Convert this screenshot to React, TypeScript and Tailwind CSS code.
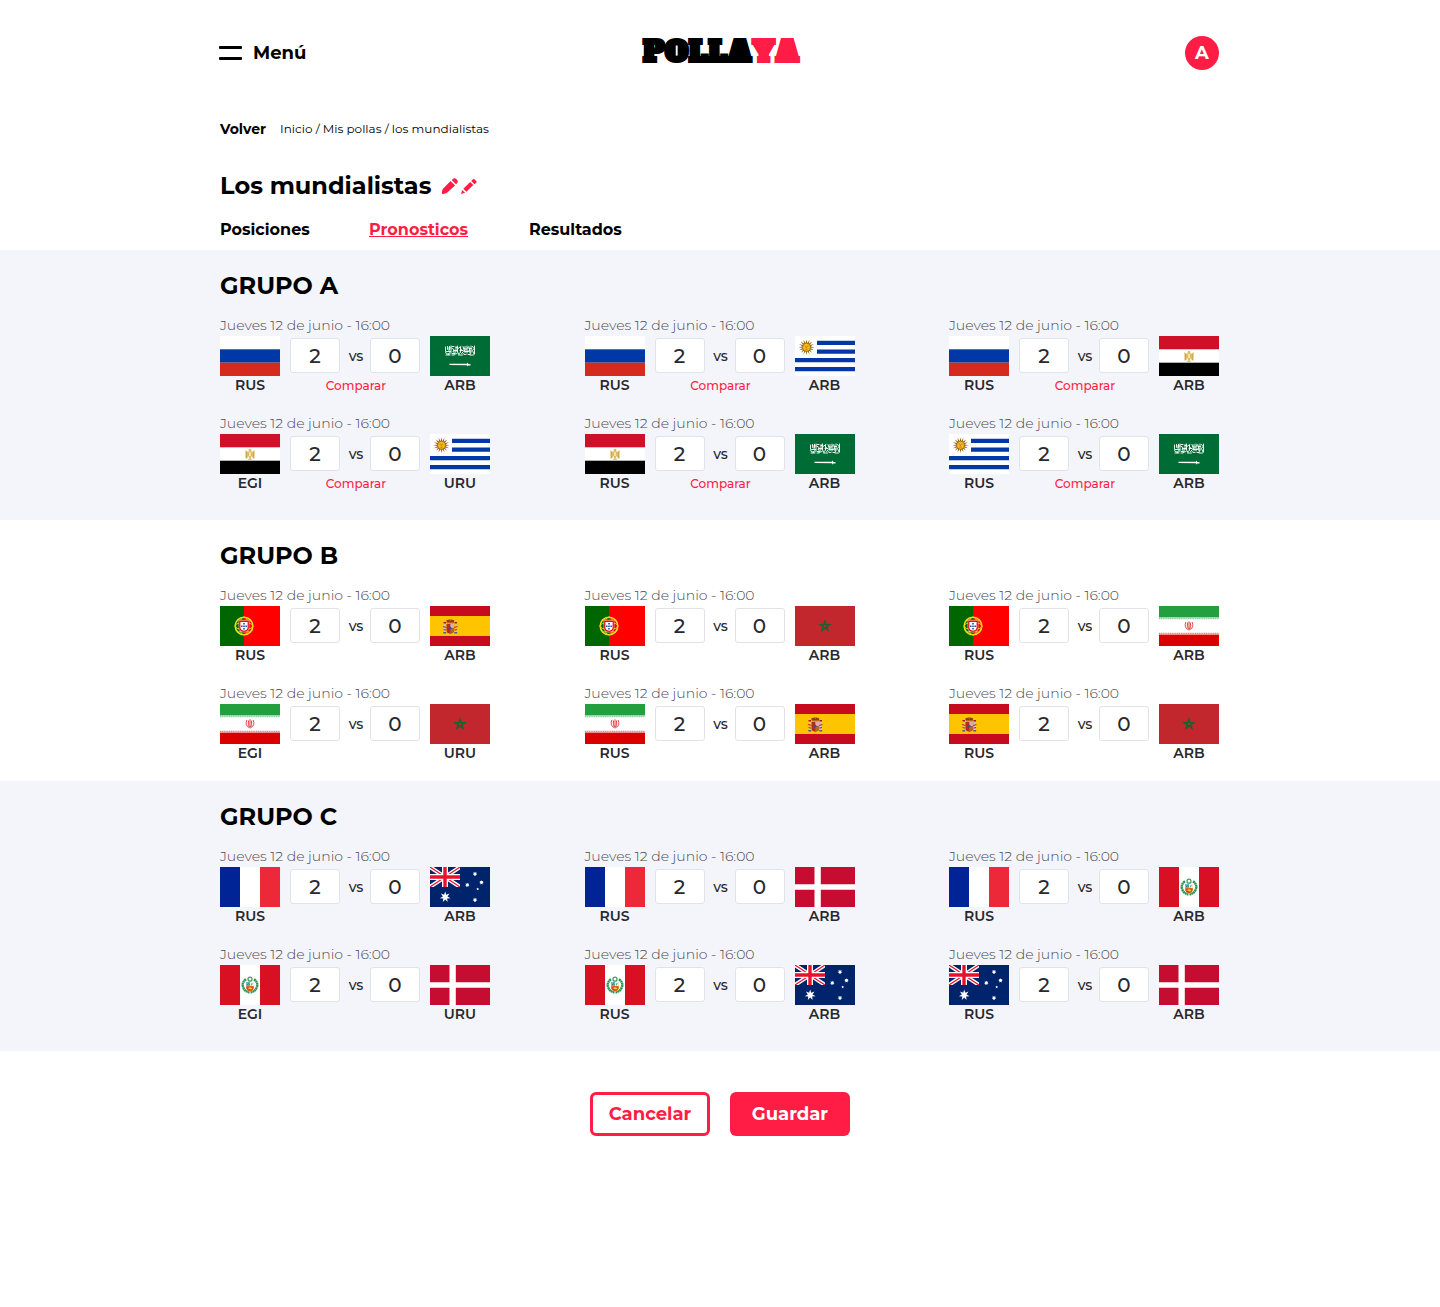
import type { ReactNode } from "react";

type FlagCode = "rus" | "ksa" | "uru" | "egy" | "por" | "esp" | "irn" | "mar" | "fra" | "aus" | "per" | "den";

function starPoints(cx: number, cy: number, outer: number, inner: number, tips: number) {
  return Array.from({ length: tips * 2 }, (_, i) => {
    const r = i % 2 === 0 ? outer : inner;
    const a = (Math.PI * i) / tips - Math.PI / 2;
    return `${(cx + r * Math.cos(a)).toFixed(2)},${(cy + r * Math.sin(a)).toFixed(2)}`;
  }).join(" ");
}

const flagArt: Record<FlagCode, ReactNode> = {
  rus: (
    <>
      <rect width="60" height="40" fill="#fff" />
      <rect y="13.3" width="60" height="13.4" fill="#0039a6" />
      <rect y="26.7" width="60" height="13.3" fill="#d52b1e" />
    </>
  ),
  ksa: (
    <>
      <rect width="60" height="40" fill="#006c35" />
      <g fill="none" stroke="#fff" strokeWidth=".9" strokeLinecap="round">
        <path d="M15.500 11v4.500q0 3 2.500 2.500l2-1.500M17.500 10.500v3l2 .8v-4M21 10v6.500q-1.500 2.500-3 2.300M21.500 12l2.500 1.500-1 2.500h3V10.500M24 18.500l3-1M27.500 10v6l1.500 2.500M28 12.500l3-2M30.500 11v5.500l-1.500 1M31.500 17.500l2-2-2-2M33 10.500l2 6v-6M36 18.500q-3 .5-3-1M37 10v7M36 13.500l3-3 1 6.500M38 18.500h2M41 10v6q0 2-1.500 2.500M42.500 10.500l1.500 2-1.500 2 1.500 3.500M44.500 10v8" />
        <path d="M16 19h4M22 19h2M26 11.500h1.500M18.500 12h2M22 10.500h2M34 12.500l1.500.5M39 12.500h2.500M16.500 15.500h4M22 17.500h3M28.500 19h4M30 14.500h3M35 15.500h3.500M40 19h3.500M24 14.500h3M38 15h3" />
      </g>
      <path d="M19.500 27.800H37l.3-1h.8v1.100l2.600.3-.3 1.300H38v.7h-.8v-1l-17.700-.3z" fill="#fff" />
    </>
  ),
  uru: (
    <>
      <rect width="60" height="40" fill="#fff" />
      <path d="M22 4.700h38v4.300H22zM22 13.600h38v4.200H22zM0 22h60v4.300H0zM0 31h60v4.200H0z" fill="#0038a8" />
      <polygon points={starPoints(11.5, 11.2, 8, 4, 16)} fill="#9a6412" />
      <circle cx="11.500" cy="11.200" r="4" fill="#f5bd16" stroke="#8a5a12" strokeWidth=".6" />
      <path d="M9.600 10.200h1.300M12.100 10.200h1.300M10.300 13.100h2.400M11.500 10.500v1.300" stroke="#7b3f00" strokeWidth=".5" />
    </>
  ),
  egy: (
    <>
      <rect width="60" height="40" fill="#fff" />
      <rect width="60" height="13.300" fill="#ce1126" />
      <rect y="26.700" width="60" height="13.300" fill="#000" />
      <path d="M25.400 16l2.200 1.700 1.200-.2-.2-2 1.400-.7 1.400.7-.2 2 1.200.2 2.200-1.700v8.500h-1.800l-1-3-1 3.300h-1.600l-1-3.300-1 3h-1.800z" fill="#dcbc64" />
      <path d="M29.300 18h1.400v4h-1.400z" fill="#fff4cf" />
      <path d="M26.500 18v6M33.500 18v6M28 25.300h4" stroke="#c79f45" strokeWidth=".7" />
    </>
  ),
  por: (
    <>
      <rect width="60" height="40" fill="#f00" />
      <rect width="24" height="40" fill="#060" />
      <circle cx="24" cy="20" r="8.800" fill="none" stroke="#f3e21b" strokeWidth="1.600" />
      <ellipse cx="24" cy="20" rx="9" ry="3.500" fill="none" stroke="#e8d51a" strokeWidth="1" />
      <ellipse cx="24" cy="20" rx="4.500" ry="9" fill="none" stroke="#e8d51a" strokeWidth="1" />
      <path d="M17.500 14q7 1 13 0M17.500 26q7-1 13 0" fill="none" stroke="#e8d51a" />
      <path d="M18.800 14.300h10.400v7q0 4.500-5.200 5-5.200-.5-5.200-5z" fill="#e30b17" stroke="#fff" strokeWidth=".4" />
      <path d="M20.400 16h7.200v5.300q0 3-3.600 3.500-3.600-.5-3.600-3.500z" fill="#fff" />
      <path d="M23.300 17h1.400v1.500h-1.400zM23.300 19.600h1.400v1.500h-1.400zM23.300 22h1.400v1.400h-1.400zM21.200 19.600h1.300v1.500h-1.300zM25.500 19.600h1.300v1.500h-1.300z" fill="#003399" />
    </>
  ),
  esp: (
    <>
      <rect width="60" height="40" fill="#c60b1e" />
      <rect y="10" width="60" height="20" fill="#ffc400" />
      <path d="M14 18h1.500v8H14zM25 18h1.500v8H25z" fill="#c9c2b8" />
      <path d="M13.300 26h2.900v1.400h-2.900zM24.300 26h2.900v1.400h-2.900z" fill="#4a5d9a" />
      <path d="M13.500 16h2.500v1.500h-2.500zM24.500 16H27v1.500h-2.500z" fill="#ad1519" />
      <path d="M13 20.500l3.500 1M27.500 20.500l-3.500 1M13.500 23.500l2.500.6M27 23.500l-2.500.6" stroke="#ad1519" strokeWidth=".9" />
      <path d="M16.500 18h7.600v6.500q0 2.700-3.800 3.200-3.800-.5-3.800-3.200z" fill="#b32a25" />
      <path d="M20.300 18h3.800v4.200h-3.800z" fill="#dcae9c" />
      <path d="M20.300 22.200h3.800v2.500q-.5 2-3.800 2.700z" fill="#b26a28" />
      <ellipse cx="20.300" cy="22.200" rx="1.200" ry="1.400" fill="#3c4d91" />
      <path d="M17 17.200l-.8-2.700 2.200-.8 1.900-.5 1.900.5 2.200.8-.8 2.700z" fill="#9c3420" />
      <path d="M17 16.800h6.600M20.300 13v2" stroke="#d9a400" strokeWidth=".7" />
    </>
  ),
  irn: (
    <>
      <rect width="60" height="40" fill="#fff" />
      <rect width="60" height="11.400" fill="#239f40" />
      <rect y="28.600" width="60" height="11.400" fill="#da0000" />
      <path d="M0 12.300h60" stroke="#8fcc9e" strokeWidth="1.800" strokeDasharray="1.300 .5" />
      <path d="M0 27.700h60" stroke="#eb8080" strokeWidth="1.800" strokeDasharray="1.300 .5" />
      <path d="M30 15.300v9.200M26.800 16q-2 5.500 2.200 7.500M33.200 16q2 5.500-2.200 7.500M28.600 16.500q-1 4 .9 6.800M31.400 16.500q1 4-.9 6.800" fill="none" stroke="#e02f2f" strokeWidth=".9" />
    </>
  ),
  mar: (
    <>
      <rect width="60" height="40" fill="#c1272d" />
      <path d="M30 14.800l3.200 9.700-8.300-6h10.200l-8.300 6z" fill="none" stroke="#17602f" strokeWidth="1.100" />
    </>
  ),
  fra: (
    <>
      <rect width="60" height="40" fill="#fff" />
      <rect width="20" height="40" fill="#002395" />
      <rect x="40" width="20" height="40" fill="#ed2939" />
    </>
  ),
  aus: (
    <>
      <rect width="60" height="40" fill="#00246b" />
      <path d="M0 0h3.500L30 17.600V20h-3.500L0 2.400zM30 0v2.400L3.500 20H0v-2.400L26.500 0z" fill="#fff" />
      <path d="M0 0l11 7.300M30 0L19 7.300M0 20l11-7.300M30 20l-11-7.300" stroke="#e8112d" strokeWidth="1.200" />
      <path d="M12 0h6v7h12v6H18v7h-6v-7H0V7h12z" fill="#fff" />
      <path d="M13.300 0h3.400v8.200H30v3.600H16.700V20h-3.400v-8.200H0V8.200h13.300z" fill="#e8112d" />
      <polygon points={starPoints(15.2, 30, 5.5, 2.4, 7)} fill="#fff" />
      <polygon points={starPoints(45, 7, 2.3, 1.3, 7)} fill="#fff" />
      <polygon points={starPoints(37.3, 18, 2.3, 1.3, 7)} fill="#fff" />
      <polygon points={starPoints(51.5, 15.5, 2.3, 1.3, 7)} fill="#fff" />
      <polygon points={starPoints(45, 33, 2.3, 1.3, 7)} fill="#fff" />
      <polygon points={starPoints(47.7, 22, 1.5, 0.7, 5)} fill="#fff" />
    </>
  ),
  per: (
    <>
      <rect width="60" height="40" fill="#fff" />
      <rect width="20" height="40" fill="#d91023" />
      <rect x="40" width="20" height="40" fill="#d91023" />
      <path d="M26 14.200q-5 3.800-2.500 8.800 2 4 6 4.300M34 14.200q5 3.800 2.500 8.800-2 4-6 4.300" fill="none" stroke="#2f9355" strokeWidth="2.400" strokeDasharray="2 .3" />
      <circle cx="30" cy="14.200" r="2" fill="none" stroke="#439b55" strokeWidth="1.200" />
      <path d="M26.200 17h7.600v5.500q0 3-3.800 3.700-3.800-.7-3.800-3.700z" fill="#f2c230" />
      <path d="M26.200 17H30v4h-3.800z" fill="#55b6d8" />
      <path d="M30 17h3.800v4H30z" fill="#f3f3e6" />
      <path d="M26.300 21.200h7.400v1.300q0 3-3.700 3.600-3.700-.6-3.700-3.600z" fill="#d9442c" />
      <path d="M28 23.500q2-2.500 4.500 0l-1.500 1z" fill="#f7cc2d" />
      <path d="M31.200 20.500l1-2.500M27 20l1.500-1.500 1 1.500" stroke="#376f3e" strokeWidth=".7" fill="none" />
    </>
  ),
  den: (
    <>
      <rect width="60" height="40" fill="#c60c30" />
      <path d="M19.500 0h6.300v17.200H60v5.600H25.800V40h-6.300V22.800H0v-5.600h19.500z" fill="#fff" />
    </>
  ),
};

const flagNames: Record<FlagCode, string> = {
  rus: "Rusia",
  ksa: "Arabia Saudita",
  uru: "Uruguay",
  egy: "Egipto",
  por: "Portugal",
  esp: "España",
  irn: "Irán",
  mar: "Marruecos",
  fra: "Francia",
  aus: "Australia",
  per: "Perú",
  den: "Dinamarca",
};

type Game = { home: FlagCode; away: FlagCode; homeLabel: string; awayLabel: string };

function game(home: FlagCode, away: FlagCode, homeLabel = "RUS", awayLabel = "ARB"): Game {
  return { home, away, homeLabel, awayLabel };
}

const groups = [
  {
    name: "GRUPO A",
    compare: true,
    className: "bg-[#f4f5fa] pb-7",
    games: [
      game("rus", "ksa"),
      game("rus", "uru"),
      game("rus", "egy"),
      game("egy", "uru", "EGI", "URU"),
      game("egy", "ksa"),
      game("uru", "ksa"),
    ],
  },
  {
    name: "GRUPO B",
    compare: false,
    className: "bg-white pb-[19px]",
    games: [
      game("por", "esp"),
      game("por", "mar"),
      game("por", "irn"),
      game("irn", "mar", "EGI", "URU"),
      game("irn", "esp"),
      game("esp", "mar"),
    ],
  },
  {
    name: "GRUPO C",
    compare: false,
    className: "bg-[#f4f5fa] pb-7",
    games: [
      game("fra", "aus"),
      game("fra", "den"),
      game("fra", "per"),
      game("per", "den", "EGI", "URU"),
      game("per", "aus"),
      game("aus", "den"),
    ],
  },
];

function Container({ children }: { children: ReactNode }) {
  return <div className="mx-auto w-full max-w-[1000px] pr-px">{children}</div>;
}

function Team({ flag, label }: { flag: FlagCode; label: string }) {
  return (
    <div className="w-[60px] text-center">
      <svg viewBox="0 0 60 40" className="block h-10 w-[60px]" role="img" aria-label={flagNames[flag]}>
        {flagArt[flag]}
      </svg>
      <p className="text-sm leading-[18px] font-semibold text-[#28282d]">{label}</p>
    </div>
  );
}

function Score({ value, label }: { value: string; label: string }) {
  return (
    <input
      type="text"
      inputMode="numeric"
      defaultValue={value}
      aria-label={label}
      className="h-[35px] w-[50px] rounded-[3px] border border-[#e2e3e8] bg-white text-center text-xl font-medium text-[#28282d]"
    />
  );
}

function Match({ match, compare }: { match: Game; compare: boolean }) {
  return (
    <article className="w-[270px]">
      <p className="text-sm leading-[22px] font-light text-[#4b4b50]">Jueves 12 de junio - 16:00</p>
      <div className="flex justify-between">
        <Team flag={match.home} label={match.homeLabel} />
        <div className="flex w-[130px] flex-col items-center pt-0.5">
          <div className="flex w-full items-center">
            <Score value="2" label={`Goles de ${flagNames[match.home]}`} />
            <span className="flex-1 pl-0.5 text-center text-sm font-medium text-[#28282d]">vs</span>
            <Score value="0" label={`Goles de ${flagNames[match.away]}`} />
          </div>
          {compare && (
            <button type="button" className="mt-[5px] ml-0.5 text-xs leading-4 font-medium text-[#ff1d45]">
              Comparar
            </button>
          )}
        </div>
        <Team flag={match.away} label={match.awayLabel} />
      </div>
    </article>
  );
}

export default function App() {
  return (
    <div className="bg-white pb-[171px] font-['Montserrat','Inter',sans-serif] text-black">
      <Container>
        <header className="grid grid-cols-3 items-center pt-9">
          <button type="button" className="flex items-center gap-[11px] justify-self-start text-lg leading-6 font-bold">
            <svg viewBox="0 0 23 14" className="-ml-px h-3.5 w-[23px]" aria-hidden="true">
              <rect width="23" height="3" rx="1" />
              <rect y="11" width="23" height="3" rx="1" />
            </svg>
            Menú
          </button>
          <a
            href="#inicio"
            className="justify-self-center pb-0.5 pl-[3px] font-['Alfa_Slab_One','DejaVu_Serif',serif] text-[30px] leading-8 font-bold [font-kerning:none] [-webkit-text-stroke:1px_currentColor]"
          >
            POLLA<span className="text-[#ff1d45]">YA</span>
          </a>
          <button
            type="button"
            aria-label="Cuenta"
            className="size-[34px] justify-self-end rounded-full bg-[#ff1d45] text-lg leading-6 font-bold text-white"
          >
            A
          </button>
        </header>

        <nav aria-label="Ruta" className="mt-[49px] flex items-center gap-3.5 leading-5">
          <a href="#volver" className="text-sm leading-5 font-bold">
            Volver
          </a>
          <p className="text-xs leading-5">
            <a href="#inicio">Inicio</a> / <a href="#mis-pollas">Mis pollas</a> / los mundialistas
          </p>
        </nav>

        <div className="mt-[31px] flex items-center gap-[11px]">
          <h1 className="text-2xl leading-8 font-bold">Los mundialistas</h1>
          <div className="flex gap-[3px] text-[#ff1d45]">
            <button type="button" aria-label="Editar nombre">
              <svg viewBox="0 0 16 16" className="block size-4" fill="currentColor" aria-hidden="true">
                <path d="M0 16q-.3-3 .8-5L8.500 3l4.500 4.500-8 7.200Q3 16 0 16z" />
                <path d="M9.800 1.900L11 .8q1.500-1.300 3.200.2l.8.800q1.500 1.700.2 3.200L14 6.200z" />
              </svg>
            </button>
            <button type="button" aria-label="Editar polla">
              <svg viewBox="0 0 16 16" className="block size-4" fill="currentColor" aria-hidden="true">
                <path d="M0 16l1.200-4.100L4.100 14.800z" />
                <path d="M2.300 10.800l6.900-6.900 3.100 3.100-6.900 6.800z" />
                <path d="M10.200 2.900l1.600-1.500q1-.8 1.900 0l1.500 1.500q.8.900 0 1.800l-1.600 1.500z" />
              </svg>
            </button>
          </div>
        </div>

        <nav aria-label="Secciones" className="mt-[18px] grid grid-cols-[149px_160px_auto] pb-[10px] text-base leading-5 font-bold">
          <a href="#posiciones">Posiciones</a>
          <a href="#pronosticos" aria-current="page" className="text-[#ff1d45] underline">
            Pronosticos
          </a>
          <a href="#resultados">Resultados</a>
        </nav>
      </Container>

      <main>
        {groups.map((group) => (
          <section key={group.name} className={group.className}>
            <Container>
              <h2 className="pt-5 text-2xl leading-8 font-bold">{group.name}</h2>
              <div className="mt-3 grid grid-cols-[auto_auto_auto] justify-between gap-y-[18px]">
                {group.games.map((match, i) => (
                  <Match key={i} match={match} compare={group.compare} />
                ))}
              </div>
            </Container>
          </section>
        ))}

        <div className="mt-[41px] flex justify-center gap-5 text-lg leading-6 font-bold">
          <button type="button" className="h-11 w-[120px] rounded-md border-3 border-[#ff1d45] bg-white text-[#ff1d45]">
            Cancelar
          </button>
          <button type="button" className="h-11 w-[120px] rounded-md bg-[#ff1d45] text-white">
            Guardar
          </button>
        </div>
      </main>
    </div>
  );
}
